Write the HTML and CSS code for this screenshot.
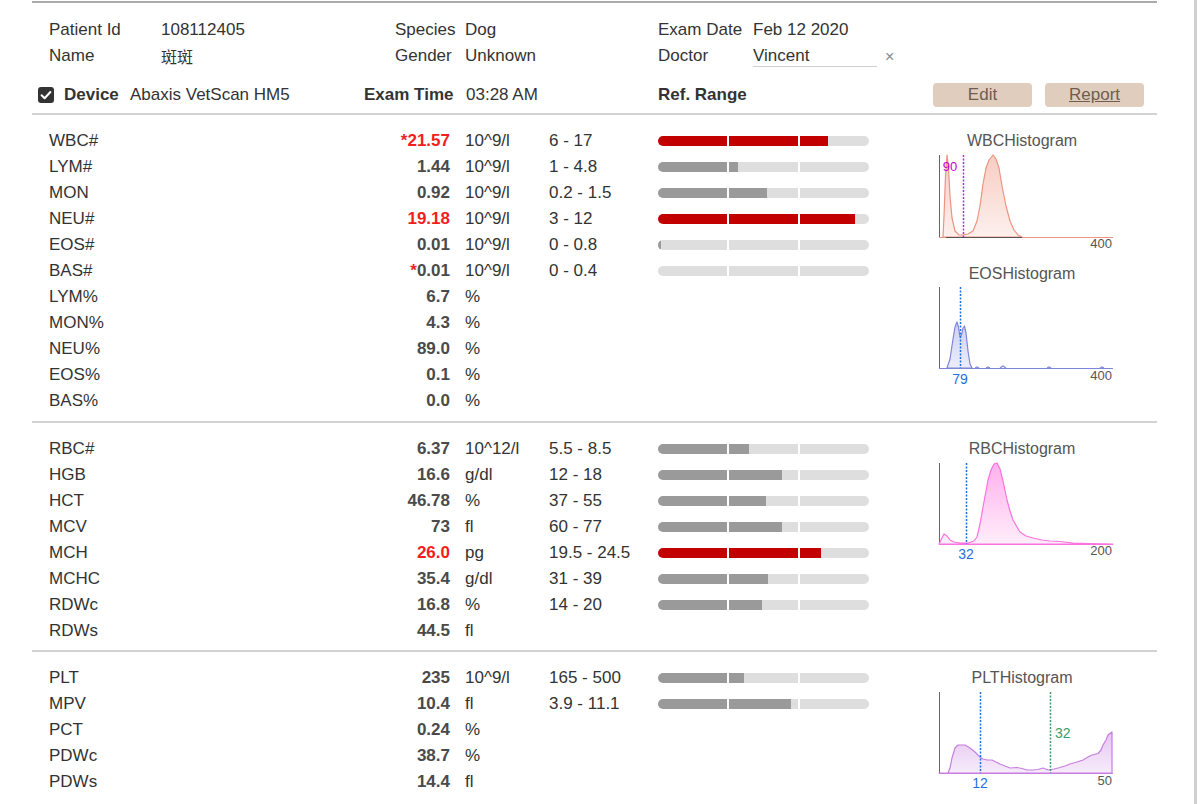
FILE: index.html
```html
<!DOCTYPE html>
<html lang="en">
<head>
<meta charset="utf-8">
<title>Exam Report</title>
<link rel="stylesheet" href="styles.css">
</head>
<body>
<div class="frame">
  <div class="sheet">
    <div class="info">
      <span>Patient Id</span><span>108112405</span><span>Species</span><span>Dog</span><span>Exam Date</span><span>Feb 12 2020</span>
      <span>Name</span><span class="cjk">斑斑</span><span>Gender</span><span>Unknown</span><span>Doctor</span>
      <span class="doc"><span class="docinput">Vincent</span><span class="clear">×</span></span>
    </div>

    <div class="devrow">
      <svg class="cb" width="16" height="16" viewBox="0 0 16 16"><rect width="16" height="16" rx="3" fill="#333"/><path d="M3.6 8.2 L6.6 11.2 L12.4 5" fill="none" stroke="#fff" stroke-width="2" stroke-linecap="round" stroke-linejoin="round"/></svg>
      <span class="dlabel">Device</span>
      <span class="dval">Abaxis VetScan HM5</span>
      <span class="tlabel">Exam Time</span>
      <span class="tval">03:28 AM</span>
      <span class="rlabel">Ref. Range</span>
      <button class="btn">Edit</button>
      <button class="btn report">Report</button>
    </div>

    <section class="section">
      <div class="rows">
        <div class="row"><span class="nm">WBC#</span><span class="val hi"><span class="ast">*</span>21.57</span><span class="unit">10^9/l</span><span class="rng">6 - 17</span>
          <span class="bar red"><span class="seg"><span class="fill" style="width:69px"></span></span><span class="seg"><span class="fill" style="width:69px"></span></span><span class="seg"><span class="fill" style="width:28px"></span></span></span></div>
        <div class="row"><span class="nm">LYM#</span><span class="val">1.44</span><span class="unit">10^9/l</span><span class="rng">1 - 4.8</span>
          <span class="bar"><span class="seg"><span class="fill" style="width:69px"></span></span><span class="seg"><span class="fill" style="width:9px"></span></span><span class="seg"></span></span></div>
        <div class="row"><span class="nm">MON</span><span class="val">0.92</span><span class="unit">10^9/l</span><span class="rng">0.2 - 1.5</span>
          <span class="bar"><span class="seg"><span class="fill" style="width:69px"></span></span><span class="seg"><span class="fill" style="width:38px"></span></span><span class="seg"></span></span></div>
        <div class="row"><span class="nm">NEU#</span><span class="val hi">19.18</span><span class="unit">10^9/l</span><span class="rng">3 - 12</span>
          <span class="bar red"><span class="seg"><span class="fill" style="width:69px"></span></span><span class="seg"><span class="fill" style="width:69px"></span></span><span class="seg"><span class="fill" style="width:55px"></span></span></span></div>
        <div class="row"><span class="nm">EOS#</span><span class="val">0.01</span><span class="unit">10^9/l</span><span class="rng">0 - 0.8</span>
          <span class="bar"><span class="seg"><span class="fill" style="width:3px"></span></span><span class="seg"></span><span class="seg"></span></span></div>
        <div class="row"><span class="nm">BAS#</span><span class="val"><span class="ast">*</span>0.01</span><span class="unit">10^9/l</span><span class="rng">0 - 0.4</span>
          <span class="bar"><span class="seg"></span><span class="seg"></span><span class="seg"></span></span></div>
        <div class="row"><span class="nm">LYM%</span><span class="val">6.7</span><span class="unit">%</span></div>
        <div class="row"><span class="nm">MON%</span><span class="val">4.3</span><span class="unit">%</span></div>
        <div class="row"><span class="nm">NEU%</span><span class="val">89.0</span><span class="unit">%</span></div>
        <div class="row"><span class="nm">EOS%</span><span class="val">0.1</span><span class="unit">%</span></div>
        <div class="row"><span class="nm">BAS%</span><span class="val">0.0</span><span class="unit">%</span></div>
      </div>
      <div class="hists">
        <div class="hist">
          <div class="htitle">WBCHistogram</div>
          <svg class="chart" width="184" height="102" viewBox="0 0 184 102">
            <defs><linearGradient id="gw" x1="0" y1="0" x2="0" y2="1"><stop offset="0" stop-color="#f09a86" stop-opacity=".5"/><stop offset="1" stop-color="#f09a86" stop-opacity=".15"/></linearGradient></defs>
            <line x1="9.5" y1="1" x2="9.5" y2="84" stroke="#666"/>
            <path d="M13 83 L14 62 L15.5 22 L17 1 L18.5 14 L20 42 L22 64 L25 77 L29 81 L33 81 L38 80 L43 77 L47 67 L50 52 L53 30 L56 14 L59 6 L63 1 L66 5 L69 14 L72 32 L76 52 L80 67 L84 76 L88 81 L92 83 Z" fill="url(#gw)" stroke="#ec9480" stroke-width="1.2" stroke-linejoin="round"/>
            <line x1="9" y1="83.5" x2="183" y2="83.5" stroke="#ec9480"/>
            <line x1="16" y1="83.5" x2="92" y2="83.5" stroke="#555"/>
            <line x1="33.5" y1="1" x2="33.5" y2="83" stroke="#a32cf0" stroke-width="1.5" stroke-dasharray="2 1.5"/>
            <text x="20" y="17" fill="#c000d0" text-anchor="middle">90</text>
            <text x="182" y="94" fill="#555" text-anchor="end">400</text>
          </svg>
        </div>
        <div class="hist">
          <div class="htitle">EOSHistogram</div>
          <svg class="chart" width="184" height="102" viewBox="0 0 184 102">
            <defs><linearGradient id="ge" x1="0" y1="0" x2="0" y2="1"><stop offset="0" stop-color="#8088e0" stop-opacity=".4"/><stop offset="1" stop-color="#8088e0" stop-opacity=".15"/></linearGradient></defs>
            <line x1="9.5" y1="0" x2="9.5" y2="82" stroke="#666"/>
            <path d="M17 81 L20 72 L23 52 L25 40 L27 35 L28.5 40 L30 50 L31.5 48 L33 41 L34.5 39 L36 46 L38 64 L40 77 L42 81 Z" fill="url(#ge)" stroke="#7f86d8" stroke-width="1.2" stroke-linejoin="round"/>
            <path d="M45 81 L47 80 L49 81 M56 81 L58 80 L60 81 M70 81 L73 79 L76 81 M117 81 L119 80 L121 81 M170 81 L172 80 L174 81" fill="none" stroke="#7f86d8" stroke-width="1.2"/>
            <line x1="9" y1="81.5" x2="183" y2="81.5" stroke="#7f86d8"/>
            <line x1="30.5" y1="0" x2="30.5" y2="81" stroke="#1f6fe0" stroke-width="1.5" stroke-dasharray="2 1.5"/>
            <text x="182" y="93" fill="#555" text-anchor="end">400</text>
            <text x="30" y="97" fill="#1f6fe0" text-anchor="middle" class="mk">79</text>
          </svg>
        </div>
      </div>
    </section>

    <section class="section tight">
      <div class="rows">
        <div class="row"><span class="nm">RBC#</span><span class="val">6.37</span><span class="unit">10^12/l</span><span class="rng">5.5 - 8.5</span>
          <span class="bar"><span class="seg"><span class="fill" style="width:69px"></span></span><span class="seg"><span class="fill" style="width:20px"></span></span><span class="seg"></span></span></div>
        <div class="row"><span class="nm">HGB</span><span class="val">16.6</span><span class="unit">g/dl</span><span class="rng">12 - 18</span>
          <span class="bar"><span class="seg"><span class="fill" style="width:69px"></span></span><span class="seg"><span class="fill" style="width:53px"></span></span><span class="seg"></span></span></div>
        <div class="row"><span class="nm">HCT</span><span class="val">46.78</span><span class="unit">%</span><span class="rng">37 - 55</span>
          <span class="bar"><span class="seg"><span class="fill" style="width:69px"></span></span><span class="seg"><span class="fill" style="width:37px"></span></span><span class="seg"></span></span></div>
        <div class="row"><span class="nm">MCV</span><span class="val">73</span><span class="unit">fl</span><span class="rng">60 - 77</span>
          <span class="bar"><span class="seg"><span class="fill" style="width:69px"></span></span><span class="seg"><span class="fill" style="width:53px"></span></span><span class="seg"></span></span></div>
        <div class="row"><span class="nm">MCH</span><span class="val hi">26.0</span><span class="unit">pg</span><span class="rng">19.5 - 24.5</span>
          <span class="bar red"><span class="seg"><span class="fill" style="width:69px"></span></span><span class="seg"><span class="fill" style="width:69px"></span></span><span class="seg"><span class="fill" style="width:21px"></span></span></span></div>
        <div class="row"><span class="nm">MCHC</span><span class="val">35.4</span><span class="unit">g/dl</span><span class="rng">31 - 39</span>
          <span class="bar"><span class="seg"><span class="fill" style="width:69px"></span></span><span class="seg"><span class="fill" style="width:39px"></span></span><span class="seg"></span></span></div>
        <div class="row"><span class="nm">RDWc</span><span class="val">16.8</span><span class="unit">%</span><span class="rng">14 - 20</span>
          <span class="bar"><span class="seg"><span class="fill" style="width:69px"></span></span><span class="seg"><span class="fill" style="width:33px"></span></span><span class="seg"></span></span></div>
        <div class="row"><span class="nm">RDWs</span><span class="val">44.5</span><span class="unit">fl</span></div>
      </div>
      <div class="hists">
        <div class="hist">
          <div class="htitle">RBCHistogram</div>
          <svg class="chart" width="184" height="102" viewBox="0 0 184 102">
            <defs><linearGradient id="gr" x1="0" y1="0" x2="0" y2="1"><stop offset="0" stop-color="#ff6fdc" stop-opacity=".55"/><stop offset="1" stop-color="#ff6fdc" stop-opacity=".12"/></linearGradient></defs>
            <line x1="9.5" y1="1" x2="9.5" y2="83" stroke="#666"/>
            <path d="M9 82 L11 78 L14 72 L17 74 L20 78 L24 80 L30 81 L38 81 L44 79 L47 75 L50 62 L53 45 L56 29 L58 18 L61 8 L64 2 L67 1 L70 7 L73 19 L77 38 L80 49 L83 58 L87 65 L90 70 L96 74 L103 76 L112 78 L120 79 L130 79.5 L143 81 L160 81.5 L183 82 Z" fill="url(#gr)" stroke="#fb72e0" stroke-width="1.2" stroke-linejoin="round"/>
            <line x1="9" y1="82.5" x2="183" y2="82.5" stroke="#fb72e0"/>
            <line x1="36.5" y1="1" x2="36.5" y2="82" stroke="#1f6fe0" stroke-width="1.5" stroke-dasharray="2 1.5"/>
            <text x="182" y="93" fill="#555" text-anchor="end">200</text>
            <text x="36" y="97" fill="#1f6fe0" text-anchor="middle" class="mk">32</text>
          </svg>
        </div>
      </div>
    </section>

    <section class="section last">
      <div class="rows">
        <div class="row"><span class="nm">PLT</span><span class="val">235</span><span class="unit">10^9/l</span><span class="rng">165 - 500</span>
          <span class="bar"><span class="seg"><span class="fill" style="width:69px"></span></span><span class="seg"><span class="fill" style="width:15px"></span></span><span class="seg"></span></span></div>
        <div class="row"><span class="nm">MPV</span><span class="val">10.4</span><span class="unit">fl</span><span class="rng">3.9 - 11.1</span>
          <span class="bar"><span class="seg"><span class="fill" style="width:69px"></span></span><span class="seg"><span class="fill" style="width:62px"></span></span><span class="seg"></span></span></div>
        <div class="row"><span class="nm">PCT</span><span class="val">0.24</span><span class="unit">%</span></div>
        <div class="row"><span class="nm">PDWc</span><span class="val">38.7</span><span class="unit">%</span></div>
        <div class="row"><span class="nm">PDWs</span><span class="val">14.4</span><span class="unit">fl</span></div>
      </div>
      <div class="hists">
        <div class="hist">
          <div class="htitle">PLTHistogram</div>
          <svg class="chart" width="184" height="102" viewBox="0 0 184 102">
            <defs><linearGradient id="gp" x1="0" y1="0" x2="0" y2="1"><stop offset="0" stop-color="#c77ee0" stop-opacity=".45"/><stop offset="1" stop-color="#c77ee0" stop-opacity=".15"/></linearGradient></defs>
            <line x1="9.5" y1="1" x2="9.5" y2="83" stroke="#666"/>
            <path d="M9 82 L18 82 L20 77 L22 67 L25 57 L28 54 L35 54 L40 57 L45 61 L50 66 L53 68 L57 69 L62 69 L66 71 L70 73 L75 75 L80 77 L87 76.5 L92 77.5 L97 79 L103 79 L108 78.5 L113 77 L118 79 L124 78 L130 76.5 L135 75 L140 73 L147 71 L153 69 L158 66 L162 64 L168 62.5 L171 59 L173 54 L176 49 L178 44 L182 41 L182 82 Z" fill="url(#gp)" stroke="#c77ee0" stroke-width="1.2" stroke-linejoin="round"/>
            <line x1="9" y1="82.5" x2="183" y2="82.5" stroke="#c77ee0"/>
            <line x1="50.5" y1="1" x2="50.5" y2="82" stroke="#1f6fe0" stroke-width="1.5" stroke-dasharray="2 1.5"/>
            <line x1="120.5" y1="1" x2="120.5" y2="82" stroke="#3a9a6c" stroke-width="1.5" stroke-dasharray="2 1.5"/>
            <text x="125" y="47" fill="#3a9a6c" class="mk">32</text>
            <text x="182" y="94" fill="#555" text-anchor="end">50</text>
            <text x="50" y="97" fill="#1f6fe0" text-anchor="middle" class="mk">12</text>
          </svg>
        </div>
      </div>
    </section>
  </div>
</div>
</body>
</html>
```

FILE: styles.css
```css
* { box-sizing: border-box; }
html, body { margin: 0; padding: 0; background: #fff; }
body {
  font-family: "Liberation Sans", Arial, "Noto Sans CJK SC", sans-serif;
  font-size: 17px;
  color: #333;
}
.cjk { font-family: "Noto Sans CJK SC", "Liberation Sans", sans-serif; font-size: 16px; }

.frame {
  width: 1197px;
  height: 804px;
  border-right: 3px solid #d0d0d0;
  overflow: hidden;
}
.sheet {
  margin-left: 32px;
  margin-top: 1px;
  width: 1125px;
  border-top: 2px solid #ababab;
}

/* patient info */
.info {
  display: grid;
  grid-template-columns: 112px 234px 70px 193px 95px auto;
  padding: 14px 0 0 17px;
  line-height: 26px;
  height: 66px;
}
.doc { display: flex; align-items: flex-start; height: 26px; }
.docinput {
  display: block;
  width: 124px;
  height: 24px;
  line-height: 26px;
  border-bottom: 1px solid #cfcfcf;
}
.clear { margin-left: 8px; color: #888; font-size: 16px; line-height: 28px; }

/* device row */
.devrow {
  display: flex;
  align-items: center;
  height: 26px;
  margin: 13px 0 5px;
}
.cb { margin: 0 10px 0 6px; flex: none; }
.dlabel { width: 66px; font-weight: bold; }
.dval { width: 234px; }
.tlabel { width: 102px; font-weight: bold; }
.tval { width: 192px; }
.rlabel { flex: 1; font-weight: bold; }
.btn {
  width: 99px;
  height: 24px;
  margin-right: 13px;
  padding: 0;
  border: none;
  border-radius: 4px;
  background: #e0cdbd;
  color: #6f5d50;
  font-family: inherit;
  font-size: 17px;
  line-height: 24px;
}
.report { text-decoration: underline; }

/* sections */
.section {
  display: flex;
  border-top: 2px solid #d2d2d2;
  padding: 13px 0 7px;
}
.section.tight { padding-bottom: 6px; }
.rows { width: 837px; padding-left: 17px; }
.row {
  display: grid;
  grid-template-columns: 280px 121px 99px 109px 211px;
  align-items: center;
  height: 26px;
  line-height: 26px;
}
.val { text-align: right; font-weight: bold; color: #4a4a4a; }
.val.hi { color: #f41c1c; }
.ast { color: #e8262c; }
.unit { padding-left: 15px; }

.bar { display: flex; gap: 2px; width: 211px; }
.seg {
  flex: 0 0 69px;
  height: 10px;
  background: #dedede;
  overflow: hidden;
}
.seg:first-child { border-radius: 5px 0 0 5px; }
.seg:last-child { border-radius: 0 5px 5px 0; }
.fill { display: block; height: 100%; background: #9a9a9a; }
.bar.red .fill { background: #c30000; }

/* histograms */
.hists { padding-left: 61px; }
.hist { width: 184px; }
.hist + .hist { margin-top: 5px; }
.htitle {
  text-align: center;
  font-size: 16px;
  line-height: 26px;
  color: #555;
}
.chart { display: block; overflow: visible; }
.chart text { font-family: "Liberation Sans", Arial, sans-serif; font-size: 13px; }
.chart text.mk { font-size: 14px; }
```
